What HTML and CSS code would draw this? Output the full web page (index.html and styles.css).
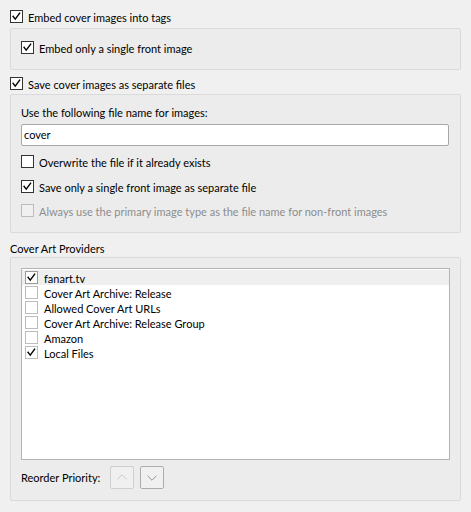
FILE: index.html
```html
<!DOCTYPE html>
<html>
<head>
<meta charset="utf-8">
<link rel="stylesheet" href="styles.css">
</head>
<body>
<div class="page">
  <div class="cbrow first"><span class="cb on"><svg viewBox="0 0 13 13"><path d="M2.5 6.3 L5 9.6 L10.2 2.6"/></svg></span><span class="lbl">Embed cover images into tags</span></div>
  <div class="group g1">
    <div class="cbrow"><span class="cb on"><svg viewBox="0 0 13 13"><path d="M2.5 6.3 L5 9.6 L10.2 2.6"/></svg></span><span class="lbl">Embed only a single front image</span></div>
  </div>
  <div class="cbrow r2"><span class="cb on"><svg viewBox="0 0 13 13"><path d="M2.5 6.3 L5 9.6 L10.2 2.6"/></svg></span><span class="lbl">Save cover images as separate files</span></div>
  <div class="group g2">
    <div class="text">Use the following file name for images:</div>
    <div class="field">cover</div>
    <div class="cbrow o1"><span class="cb"></span><span class="lbl">Overwrite the file if it already exists</span></div>
    <div class="cbrow o2"><span class="cb on"><svg viewBox="0 0 13 13"><path d="M2.5 6.3 L5 9.6 L10.2 2.6"/></svg></span><span class="lbl">Save only a single front image as separate file</span></div>
    <div class="cbrow o3 disabled"><span class="cb"></span><span class="lbl">Always use the primary image type as the file name for non-front images</span></div>
  </div>
  <div class="text title">Cover Art Providers</div>
  <div class="group g3">
    <div class="list">
      <div class="item sel"><span class="cb lc on"><svg viewBox="0 0 13 13"><path d="M2.5 6.3 L5 9.6 L10.2 2.6"/></svg></span><span class="lbl">fanart.tv</span></div>
      <div class="item"><span class="cb lc"></span><span class="lbl">Cover Art Archive: Release</span></div>
      <div class="item"><span class="cb lc"></span><span class="lbl">Allowed Cover Art URLs</span></div>
      <div class="item"><span class="cb lc"></span><span class="lbl">Cover Art Archive: Release Group</span></div>
      <div class="item"><span class="cb lc"></span><span class="lbl">Amazon</span></div>
      <div class="item"><span class="cb lc on"><svg viewBox="0 0 13 13"><path d="M2.5 6.3 L5 9.6 L10.2 2.6"/></svg></span><span class="lbl">Local Files</span></div>
    </div>
    <div class="reorder">
      <span class="rlabel">Reorder Priority:</span>
      <span class="btn dis"><svg viewBox="0 0 23 23"><path d="M6.5 13.5 L11.5 8.5 L16.5 13.5"/></svg></span>
      <span class="btn"><svg viewBox="0 0 23 23"><path d="M6.5 9.5 L11.5 14.5 L16.5 9.5"/></svg></span>
    </div>
  </div>
</div>
</body>
</html>
```

FILE: styles.css
```css
* { box-sizing: border-box; }
html, body { margin: 0; padding: 0; }
body {
  background: #f0f0f0;
  font-family: Lato, "Noto Sans", sans-serif;
  font-size: 11px;
  color: #000;
  width: 471px;
  height: 512px;
  overflow: hidden;
}
.page {
  display: flex;
  flex-direction: column;
  margin-left: 10px;
  width: 451px;
}
.cbrow {
  display: flex;
  align-items: center;
  height: 15px;
  line-height: 15px;
  white-space: nowrap;
}
.cbrow.first { margin-top: 9px; }
.cbrow.r2 { margin-top: 6px; }
.cb {
  width: 13px;
  height: 13px;
  flex: none;
  background: #fff;
  border: 1px solid #333;
  display: inline-flex;
}
.cb svg { width: 11px; height: 11px; }
.cb svg path {
  fill: none;
  stroke: #000;
  stroke-width: 1.7;
  stroke-linecap: square;
  stroke-linejoin: miter;
}
.cbrow .lbl { margin-left: 5px; padding-top: 1px; }
.disabled .cb { border-color: #bcbcbc; background: #f0f0f0; }
.disabled .lbl { color: #8d8d8d; }

.group {
  background: #ececec;
  border: 1px solid #dadada;
  border-radius: 2px;
  display: flex;
  flex-direction: column;
}
.g1 { margin-top: 4px; height: 42px; padding: 11px 10px 0 10px; }
.g2 { margin-top: 3px; height: 139px; padding: 9px 11px 0 10px; }
.text { height: 15px; line-height: 15px; padding-top: 1px; white-space: nowrap; }
.field {
  margin-top: 5px;
  height: 22px;
  background: #fff;
  border: 1px solid #a9a9a9;
  border-radius: 2px;
  line-height: 20px;
  padding-left: 2px;
}
.o1 { margin-top: 8px; }
.o2 { margin-top: 10px; }
.o3 { margin-top: 9px; }
.title { margin-top: 7px; }
.g3 { margin-top: 2px; height: 244px; padding: 10px 10px 0 10px; }
.list {
  height: 192px;
  background: #fff;
  border: 1px solid #b4b4b4;
  padding-top: 1px;
}
.item {
  display: flex;
  align-items: center;
  height: 15px;
  line-height: 15px;
  padding-left: 3px;
  white-space: nowrap;
}
.item.sel { background: #efefef; }
.cb.lc { border-color: #bdbdbd; }
.item.sel .cb.lc { border-color: #9a9a9a; }
.item .lbl { margin-left: 6px; padding-top: 1px; }
.reorder {
  margin-top: 6px;
  display: flex;
  align-items: center;
  height: 23px;
}
.rlabel { flex: none; width: 89px; white-space: nowrap; }
.btn {
  width: 24px;
  height: 23px;
  border: 1px solid #adadad;
  border-radius: 2px;
  background: #f0f0f0;
  display: inline-flex;
  margin-right: 6px;
}
.btn svg { width: 22px; height: 21px; }
.btn svg path { fill: none; stroke: #8a8a8a; stroke-width: 1; }
.btn.dis { border-color: #cfcfcf; }
.btn.dis svg path { stroke: #c4c4c4; }
```
